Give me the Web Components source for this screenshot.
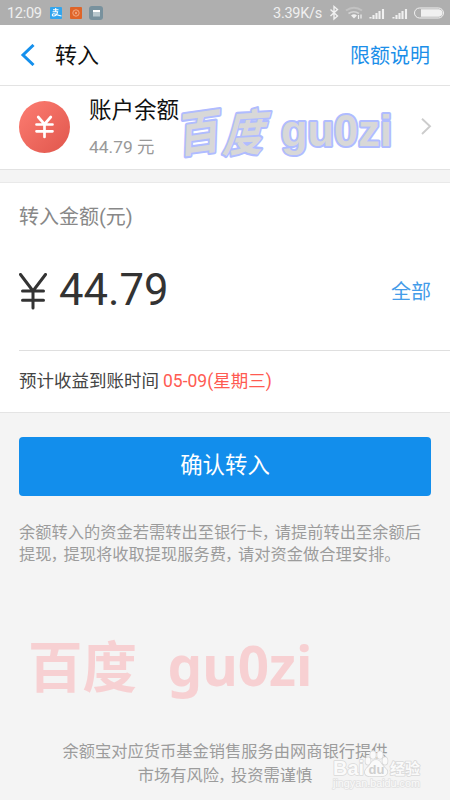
<!DOCTYPE html>
<html lang="zh-CN"><head><meta charset="utf-8"><title>转入</title>
<style>html,body{margin:0;height:800px;overflow:hidden;background:#f4f4f4}body{font-family:Roboto,"Noto Sans CJK SC",sans-serif;font-weight:400;color:#111}</style></head>
<body><transfer-page></transfer-page>
<script>
const define=(name,html)=>customElements.define(name,class extends HTMLElement{
  constructor(){super();this.attachShadow({mode:'open'}).innerHTML=html;}
});
define('status-bar',`<style>:host{display:flex;box-sizing:border-box;height:25px;background:#afafaf;color:#f0f0f0;align-items:center;padding:1px 6px 0 7px;font:14.5px/24px Roboto,sans-serif}
svg{display:block;flex:none}.time{width:43px;font-size:14.6px;letter-spacing:-.35px}.speed{margin-left:auto;width:50px;margin-right:6px;padding-top:1px;white-space:nowrap;letter-spacing:-.25px}</style>
<span class="time">12:09</span>
<svg width="54" height="24" viewBox="50 0 54 24"><rect x="50" y="6" width="12" height="12" rx="1" fill="#31a5ee"/><path d="M53 8.7h5.5M55.7 7v3.8M52.6 10.8h5c-.5 2.3-2.2 4.2-3.9 4.2-1.9 0-1.9-2.2 0-2.2 2.2 0 4 1.6 7.8 2.2" fill="none" stroke="#fff" stroke-width="1.1"/><rect x="70" y="6" width="12" height="12" rx="1" fill="#df6428"/><circle cx="76" cy="12" r="3.2" fill="none" stroke="#f6b896" stroke-width=".8"/><path d="M75 10.7l2 2.6m0-2.6l-2 2.6" stroke="#f6b896" stroke-width=".8"/><rect x="89" y="5" width="14" height="14" rx="3" fill="#78919d"/><path d="M93 9h7v6.5h-7z" fill="#b8c7cd"/><path d="M93 9h7v2h-7z" fill="#fff"/></svg>
<span class="speed">3.39K/s</span>
<svg width="115" height="24" viewBox="329 0 115 24" fill="none" stroke="#f0f0f0"><path d="M330.5 8.5l7 6.5-3.5 3V5.5l3.5 3-7 6.5" stroke-width="1.4"/><path d="M346 9.5q8-5.5 16 0" stroke="#c2c2c2" stroke-width="2"/><path d="M348.5 12.5q5.2-3.5 10.5 0" stroke="#d2d2d2" stroke-width="1.7"/><path d="M351 14.4q3-2.3 6 0l-3 3z" fill="#f0f0f0" stroke="none"/><path d="M358.5 14v4M361 13.5v4" stroke-width="1.2"/><path d="M370.5 17.5V16M373.5 18v-4M376.5 18v-6M379.5 18v-8M383 18V8M393.5 17.5V16M396.5 18v-4M399.5 18v-6M402.5 18v-8M406 18V8" stroke-width="2.1"/><rect x="414.5" y="7" width="29" height="10" rx="5"/><path d="M421 8.3h18q3.5.5 3.5 3.7t-3.5 3.7h-18z" fill="#f0f0f0" stroke="none"/></svg>`);
define('nav-bar',`<style>:host{display:flex;box-sizing:border-box;height:61px;background:#fff;border-bottom:1px solid #e3e3e3;align-items:center;padding:0 20px 0 20px}svg{margin-right:20px}.title{font-size:22px;line-height:30px;color:#111;padding-top:1px}.action{margin-left:auto;color:#1c8fe9;font-size:20px;line-height:30px;padding-top:2px}</style>
<svg width="15" height="22" viewBox="0 0 15 22"><path d="M13.5 1L3 11l10.5 10" fill="none" stroke="#1590ed" stroke-width="3"/></svg><span class="title"><slot></slot></span><span class="action"><slot name="action"></slot></span>`);
define('account-row',`<style>:host{display:flex;position:relative;box-sizing:border-box;height:84px;background:#fff;border-bottom:1px solid #e2e2e2;align-items:flex-start;padding:0 18px 0 19px}.coin{margin-top:15px;margin-right:19px}.copy{display:flex;flex-direction:column;padding-top:9px}.name{font-size:22.5px;line-height:31px;color:#111}.amount{font-size:17.4px;line-height:24px;color:#999;margin-top:9px}.chev{margin:31px 0 0 auto}</style>
<svg class="coin" width="51" height="52" viewBox="0 0 51 52"><defs><linearGradient id="g" x1="0" y1="0" x2="1" y2="1"><stop offset=".1" stop-color="#fa796e"/><stop offset=".9" stop-color="#e35a50"/></linearGradient></defs><ellipse cx="25.5" cy="26" rx="25.5" ry="26" fill="url(#g)"/><path d="M19.2 16l6.3 7.2 6.3-7.2M17.5 23.5h16M17.5 30.3h16M25.5 23v13" fill="none" stroke="#fff" stroke-width="2.7" stroke-linecap="round"/></svg>
<div class="copy"><span class="name"><slot name="name"></slot></span><span class="amount"><slot name="amount"></slot></span></div><svg class="chev" width="12" height="19" viewBox="0 0 12 19"><path d="M2 1.8l8 7.5-8 7.7" stroke="#ccc" stroke-width="1.9" fill="none"/></svg>`);
define('amount-card',`<style>:host{display:block;box-sizing:border-box;height:231px;margin-top:12px;background:#fff;border-top:1px solid #e9e9e9;border-bottom:1px solid #e4e4e4;padding-left:19px}.label{font-size:20px;line-height:30px;color:#888;padding-top:19px}.value{display:flex;align-items:center;height:118px;padding-right:19px;color:#333}.value svg{flex:none}.number{font-size:43.6px;line-height:50px;margin-left:12px}.all{margin-left:auto;color:#449ce9;font-size:20px;padding-bottom:1px}.date{box-sizing:border-box;border-top:1px solid #dfdfdf;height:62px;line-height:60px;font-size:17.5px;color:#444;white-space:nowrap}.red{color:#ff5b52;margin-left:4px}</style>
<div class="label"><slot name="label"></slot></div><div class="value"><svg width="28" height="37" viewBox="0 0 28 37"><path d="M1.5 1.5L14 18 26.5 1.5M3.5 18h21M3.5 27.3h21M14 18v17" fill="none" stroke="#333" stroke-width="3" stroke-linecap="round"/></svg><span class="number"><slot name="value"></slot></span><span class="all"><slot name="all"></slot></span></div><div class="date"><slot name="date"></slot><span class="red"><slot name="when"></slot></span></div>`);
define('confirm-button',`<style>:host{display:block;margin:24px 19px 0}button{display:block;width:100%;height:59px;border:0;border-radius:4px;background:#128eec;color:#fff;padding:0 0 4px;font:22.4px/32px Roboto,"Noto Sans CJK SC",sans-serif}</style><button><slot></slot></button>`);
define('cn-comma',`<style>:host{display:inline-block;width:12px;text-indent:-1px;overflow:visible;white-space:nowrap}</style>，`);
define('fine-print',`<style>:host{display:block;white-space:nowrap;font-size:16.25px;line-height:22px;color:#9c9c9c}</style><slot></slot>`);
define('outline-mark',`<style>:host{position:absolute;left:178px;top:95px;width:220px;height:74px}svg{display:block;overflow:visible}text{fill:#d8d8d8;stroke:#b0bcff;stroke-width:4px;stroke-linejoin:round;paint-order:stroke}</style><svg width="220" height="74"><g font-family="Noto Sans CJK SC" font-weight="700"><text font-size="46" transform="translate(1 58) rotate(-8) skewX(-10) scale(.92 1.03)">百</text><text font-size="47" transform="translate(44 57) rotate(-3) skewX(-18) scale(.86 1.04)">度</text></g><text x="103" y="51" font-family="Liberation Sans" font-weight="700" font-size="43.5" textLength="111" lengthAdjust="spacingAndGlyphs">gu0zi</text></svg>`);
define('pink-mark',`<style>:host{position:absolute;left:28px;top:615px;width:300px;height:110px}svg{display:block;overflow:visible}text{fill:#f7d0d2;font-weight:700}</style><svg width="300" height="110"><text x="0" y="72" font-family="Noto Sans CJK SC" font-size="54.5">百度</text><text x="139.5" y="71" font-family="Noto Sans" font-size="55.5" textLength="145" lengthAdjust="spacingAndGlyphs">gu0zi</text></svg>`);
define('baidu-mark',`<style>:host{position:absolute;left:330px;top:746px;width:94px;height:44px}svg{display:block;overflow:visible}text,.paw{fill:#fafafa;stroke:#d9d9d9;stroke-width:1.6px;paint-order:stroke;stroke-linejoin:round}</style><svg width="94" height="44"><text x="3" y="29" font-family="Liberation Sans" font-weight="700" font-size="21" textLength="31" lengthAdjust="spacingAndGlyphs">Bai</text><g class="paw"><ellipse cx="38" cy="15" rx="2.5" ry="3.7"/><ellipse cx="43" cy="9" rx="2.7" ry="3.7"/><ellipse cx="50" cy="9" rx="2.7" ry="3.7"/><ellipse cx="55" cy="15" rx="2.5" ry="3.7"/><path d="M46 14c5 0 5 5 9 8 5 4 1 9-4 8h-10c-6 1-8-4-4-8 4-3 4-8 9-8z"/></g><text x="38.5" y="28" style="fill:#cfcfcf;stroke:none" font-family="Liberation Sans" font-weight="700" font-size="13">du</text><text x="60" y="28" font-family="Noto Sans CJK SC" font-weight="700" font-size="15">经验</text><text x="3" y="41" font-family="Liberation Sans" font-size="10" textLength="87" lengthAdjust="spacingAndGlyphs" style="stroke:#e2e2e2">jingyan.baidu.com</text></svg>`);
define('transfer-page',`<style>:host{display:block;position:relative;height:800px;width:450px;overflow:hidden;background:#f4f4f4}.note{margin:26px 0 0 19px}.foot{margin-top:174px;text-align:center;line-height:24px}</style>
<status-bar></status-bar><nav-bar>转入<span slot="action">限额说明</span></nav-bar>
<account-row><span slot="name">账户余额</span><span slot="amount">44.79 元</span></account-row>
<amount-card><span slot="label">转入金额(元)</span><span slot="value">44.79</span><span slot="all">全部</span><span slot="date">预计收益到账时间</span><span slot="when">05-09(星期三)</span></amount-card>
<confirm-button>确认转入</confirm-button>
<fine-print class="note">余额转入的资金若需转出至银行卡<cn-comma></cn-comma>请提前转出至余额后<br>提现<cn-comma></cn-comma>提现将收取提现服务费<cn-comma></cn-comma>请对资金做合理安排。</fine-print>
<fine-print class="foot">余额宝对应货币基金销售服务由网商银行提供<br>市场有风险<cn-comma></cn-comma>投资需谨慎</fine-print>
<outline-mark></outline-mark><pink-mark></pink-mark><baidu-mark></baidu-mark>`);
</script></body></html>
